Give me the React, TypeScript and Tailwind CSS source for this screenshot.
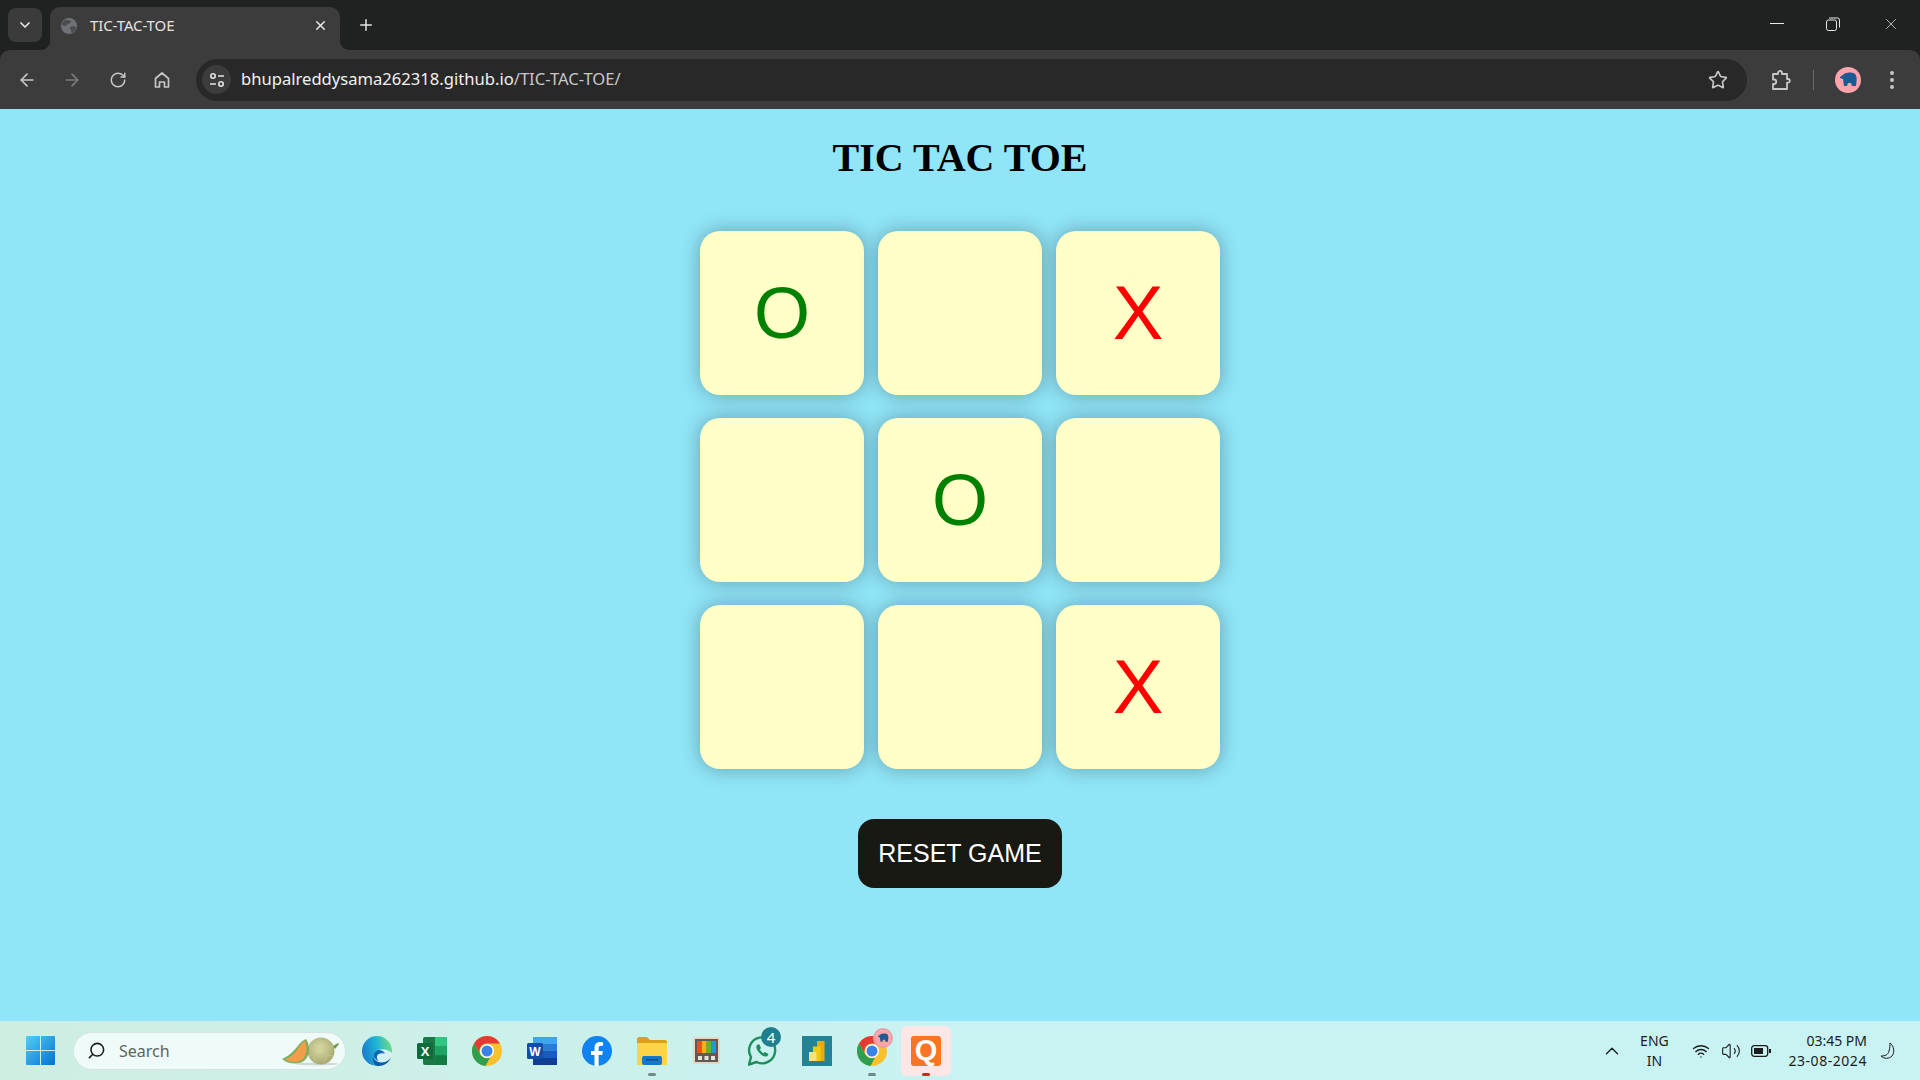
import { ArrowLeft, ArrowRight, ChevronDown, ChevronUp, Plus, RotateCw, Search, Star, Volume2, Wifi, X } from "lucide-react"

const board = ["O", "", "X", "", "O", "", "", "", "X"]

const uiFont = "font-['Noto_Sans','Open_Sans',sans-serif]"

const RestoreIcon = () => (
    <svg width="14" height="14" viewBox="0 0 14 14" fill="none" stroke="#e8e8e8" strokeWidth="1">
        <rect x="0.5" y="3" width="10" height="10.5" rx="2" />
        <path d="M3 1h8.5a2 2 0 0 1 2 2v7.5" />
    </svg>
)

const HomeIcon = () => (
    <svg width="20" height="20" viewBox="0 0 20 20" fill="none" stroke="#c7c7c7" strokeWidth="1.7">
        <path d="M3.5 8.5 10 3l6.500 5.500V17h-4v-5h-5v5h-4z" strokeLinejoin="round" />
    </svg>
)

const TuneIcon = () => (
    <svg width="18" height="18" viewBox="0 0 18 18" fill="none" stroke="#e3e3e3" strokeWidth="1.6">
        <circle cx="5" cy="5" r="2.200" />
        <path d="M10 5h6M2 13h6" />
        <circle cx="13" cy="13" r="2.200" />
    </svg>
)

const PuzzleIcon = () => (
    <svg width="22" height="22" viewBox="0 0 22 22" fill="none" stroke="#c7c7c7" strokeWidth="1.800">
        <path d="M3 5h5V4a2 2 0 0 1 4 0v1h5v5h1a1.800 1.800 0 0 1 0 3.600h-1V20H3v-5h1a2.200 2.200 0 0 0 0-4.500H3z" strokeLinejoin="round" />
    </svg>
)

const GlobeIcon = () => (
    <svg width="16" height="16" viewBox="0 0 16 16">
        <circle cx="8" cy="8" r="8" fill="#6e7276" />
        <path d="M4 2c2 0 5 0 6 1s-2 3-3 3-1 2-3 2-3-1-3-2 1-3 3-4zM9 9c2-1 5-1 6 0s-2 5-4 6c-1-1-1-2-1-3s-2-2-1-3z" fill="#4a4c4e" />
    </svg>
)

const Elephant = ({ size }: { size: number }) => (
    <svg width={size} height={size} viewBox="0 0 26 26">
        <circle cx="13" cy="13" r="13" fill="#fda4ab" />
        <path d="M5 10l4-3c3-2 9-2 11 0 2 2 2 6 1 12h-4l-1-3h-3l-1 3H9l-1-7-3-1z" fill="#1d5a94" />
    </svg>
)

const WindowsLogo = () => (
    <svg width="29" height="29" viewBox="0 0 29 29">
        <defs>
            <linearGradient id="win" x1="0" y1="0" x2="1" y2="1">
                <stop offset="0" stopColor="#4fd0fb" />
                <stop offset="1" stopColor="#0670cf" />
            </linearGradient>
        </defs>
        <path d="M1 0h13v14H0V1a1 1 0 0 1 1-1zM15 0h13a1 1 0 0 1 1 1v13H15zM0 15h14v14H1a1 1 0 0 1-1-1zM15 15h14v13a1 1 0 0 1-1 1H15z" fill="url(#win)" />
    </svg>
)

const Melon = () => (
    <svg width="60" height="30" viewBox="0 0 60 30">
        <defs>
            <radialGradient id="melon" cx="0.45" cy="0.4" r="0.65">
                <stop offset="0" stopColor="#dcdba8" />
                <stop offset="1" stopColor="#a3a56c" />
            </radialGradient>
        </defs>
        <ellipse cx="36" cy="28" rx="22" ry="1.500" fill="#00000022" />
        <circle cx="40" cy="15" r="13.500" fill="url(#melon)" />
        <path d="M34 3c-3 7-3 17 1 24M44 2c3 8 3 18-1 25M28 10c7 3 17 3 24 0M28 20c7-2 17-2 24 0" fill="none" stroke="#c4c48d" strokeWidth="0.700" />
        <path d="M52 10l5-3 1 1-4 5z" fill="#6f9a4c" />
        <path d="M25 3C17 6 15 17 1 23c7 6 19 6 24 0 4-6 4-14 0-20z" fill="#7fae5e" />
        <path d="M24 5c-6 3-8 14-20 18.500 6 3.500 15 3.500 19-1.500 3-5 3-12 1-17z" fill="#f29d4b" />
    </svg>
)

const Edge = () => (
    <svg width="30" height="30" viewBox="0 0 30 30">
        <defs>
            <linearGradient id="edge" x1="0" y1="0.6" x2="1" y2="0.4">
                <stop offset="0" stopColor="#1a78cc" />
                <stop offset="0.5" stopColor="#1cb2d6" />
                <stop offset="1" stopColor="#6fdc86" />
            </linearGradient>
        </defs>
        <circle cx="15" cy="15" r="15" fill="url(#edge)" />
        <path d="M30 17c-3-3-9-5-14-3-3 1-5 4-4 7 1 4 5 6 9 5.500 3-.5 6-2 8-5 1-2 1-3 1-4.500z" fill="#d4f2f4" />
        <path d="M16 14c-3 1-5 4-4 7 1 2 3 4 5 4.500-2-2-3-5-1-7 2-1.500 5-1.500 7-1-1-2-4-4-7-3.500z" fill="#0f68b4" />
        <path d="M29 21.500c-2 3-5 4.500-8 5-5 .5-9-1.500-10-6-.5 6 2 9.500 5 9.500 6 0 11-3.500 13-8.500z" fill="#0c5aa6" />
    </svg>
)

const Excel = () => (
    <svg width="30" height="30" viewBox="0 0 30 30">
        <rect x="6" y="1" width="24" height="28" rx="2" fill="#1a7a47" />
        <rect x="18" y="1" width="12" height="9.500" fill="#33c481" />
        <rect x="18" y="10.500" width="12" height="9" fill="#21a366" />
        <rect x="18" y="19.500" width="12" height="9.500" fill="#107c41" />
        <rect x="0" y="7" width="16" height="16" rx="1.500" fill="#0f6b39" />
        <text x="8" y="19.500" textAnchor="middle" fontSize="13" fontWeight="700" fill="#fff" fontFamily="Liberation Sans, sans-serif">X</text>
    </svg>
)

const Chrome = () => (
    <svg width="30" height="30" viewBox="0 0 30 30">
        <circle cx="15" cy="15" r="15" fill="#fbc02d" />
        <path d="M15 0a15 15 0 0 1 13 7.500H15a7.500 7.500 0 0 0-6.500 11.300L2 7.500A15 15 0 0 1 15 0z" fill="#e53935" />
        <path d="M2 7.500l6.500 11.300A7.500 7.500 0 0 0 18 21.500L13.500 30A15 15 0 0 1 2 7.500z" fill="#2e9e4f" />
        <circle cx="15" cy="15" r="7" fill="#fff" />
        <circle cx="15" cy="15" r="5.500" fill="#3b82e8" />
    </svg>
)

const Word = () => (
    <svg width="30" height="30" viewBox="0 0 30 30">
        <rect x="6" y="1" width="24" height="28" rx="2" fill="#185abd" />
        <rect x="6" y="1" width="24" height="7" fill="#41a5ee" />
        <rect x="6" y="8" width="24" height="7" fill="#2b7cd3" />
        <rect x="6" y="22" width="24" height="7" fill="#103f91" />
        <rect x="0" y="7" width="16" height="16" rx="1.500" fill="#124da8" />
        <text x="8" y="19.500" textAnchor="middle" fontSize="12" fontWeight="700" fill="#fff" fontFamily="Liberation Sans, sans-serif">W</text>
    </svg>
)

const Facebook = () => (
    <svg width="30" height="30" viewBox="0 0 30 30">
        <circle cx="15" cy="15" r="15" fill="#0f84f0" />
        <path d="M12.500 30V19H9v-4h3.500v-3c0-4 2.200-6 5.600-6l3 .2v3.600h-2c-1.900 0-2.500 1-2.500 2.300V15h4.300l-.7 4h-3.600v11z" fill="#fff" />
    </svg>
)

const Folder = () => (
    <svg width="30" height="28" viewBox="0 0 30 28">
        <path d="M0 2a2 2 0 0 1 2-2h8l3 3h15a2 2 0 0 1 2 2v4H0z" fill="#dca01a" />
        <path d="M0 6h30v22H0z" fill="#fdd447" />
        <rect x="5" y="19" width="20" height="9" rx="2" fill="#1479c9" />
        <rect x="9" y="22" width="12" height="1.500" fill="#0a4a8a" />
    </svg>
)

const ColorTool = () => (
    <svg width="27" height="27" viewBox="0 0 27 27">
        <rect width="27" height="27" rx="1.500" fill="#e6d7bf" />
        <rect x="2" y="2" width="23" height="23" fill="#5e5a57" />
        <rect x="4" y="4" width="4.800" height="12" fill="#e5501f" />
        <rect x="8.800" y="4" width="4.800" height="12" fill="#f6b21a" />
        <rect x="13.600" y="4" width="4.800" height="12" fill="#65b32e" />
        <rect x="18.400" y="4" width="4.600" height="12" fill="#1f9ad6" />
        <rect x="5" y="19" width="4" height="4" fill="#e8e2d6" />
        <rect x="11.500" y="19" width="4" height="4" fill="#e8e2d6" />
        <rect x="18" y="19" width="4" height="4" fill="#e8e2d6" />
    </svg>
)

const WhatsApp = () => (
    <svg width="30" height="30" viewBox="0 0 30 30" fill="none">
        <path d="M2 28.500l2-7.500A13 13 0 1 1 9.500 26z" stroke="#1c8f5c" strokeWidth="2.400" strokeLinejoin="round" />
        <path d="M10.500 8.500c-2 1.500-1.500 4.500 1.500 8s6 5 8.500 3.500l1-2-3.500-2-1.500 1.200c-1.500-.7-3-2.300-3.700-3.700l1.200-1.500-1.500-3.500z" fill="#1c8f5c" />
    </svg>
)

const PowerBi = () => (
    <svg width="30" height="30" viewBox="0 0 30 30">
        <rect width="30" height="30" fill="#238294" />
        <rect x="15" y="5" width="7.500" height="20" fill="#e6ad10" />
        <rect x="11" y="10.500" width="7.500" height="14.500" fill="#f2c811" />
        <rect x="7" y="16" width="7.500" height="9" fill="#f6e27f" />
    </svg>
)

const Quora = () => (
    <div className="w-[30px] h-[30px] rounded-[3px] bg-[#f97423] flex items-center justify-center">
        <span className="text-white text-[29px] leading-none font-bold font-['Liberation_Sans',sans-serif]">Q</span>
    </div>
)

const Battery = () => (
    <svg width="20" height="12" viewBox="0 0 20 12" fill="none">
        <rect x="0.700" y="0.700" width="16" height="10.600" rx="2.500" stroke="#1c1c1c" strokeWidth="1.300" />
        <rect x="3" y="3" width="9" height="6" fill="#1c1c1c" />
        <rect x="18" y="4" width="2" height="4" fill="#1c1c1c" />
    </svg>
)

const MoonIcon = () => (
    <svg width="17" height="18" viewBox="0 0 17 18" fill="none" stroke="#1c1c1c" strokeWidth="1">
        <path d="M10 1c4 3 5 9 2 13-3 3-8 3-11 0 4 0 7-1 8-5 1-3 1-6 1-8z" strokeLinejoin="round" />
    </svg>
)

const App = () => {
    return (
        <div className={`w-full h-[1080px] flex flex-col overflow-hidden bg-[#90e5f8] ${uiFont}`}>
            {/* Browser chrome */}
            <div className="shrink-0 bg-[#202221]">
                <div className="h-[50px] flex items-end pl-2">
                    <div className="w-[34px] h-[34px] mb-2 rounded-lg bg-[#3b3b3b] flex items-center justify-center">
                        <ChevronDown size={16} color="#e8e8e8" strokeWidth={2.5} />
                    </div>
                    <div className="ml-2 w-[290px] h-[43px] rounded-t-[10px] bg-[#3c3c3c] flex items-center pl-[11px] pr-3 pb-[6px] relative">
                        <span className="absolute left-[-10px] bottom-0 w-[10px] h-[10px] bg-[radial-gradient(circle_at_0_0,transparent_10px,#3c3c3c_10.5px)]" />
                        <span className="absolute right-[-10px] bottom-0 w-[10px] h-[10px] bg-[radial-gradient(circle_at_100%_0,transparent_10px,#3c3c3c_10.5px)]" />
                        <GlobeIcon />
                        <span className="ml-[13px] text-[15px] tracking-[-0.1px] text-[#e3e3e3]">TIC-TAC-TOE</span>
                        <X size={15} color="#e3e3e3" strokeWidth={2.5} className="ml-auto" />
                    </div>
                    <Plus size={18} color="#e3e3e3" strokeWidth={2} className="ml-[17px] mb-4" />
                    <div className="ml-auto flex items-center h-full pr-[20px] gap-[42px] pb-[3px]">
                        <div className="w-[14px] h-px bg-[#e8e8e8]" />
                        <RestoreIcon />
                        <X size={18} color="#e8e8e8" strokeWidth={1} />
                    </div>
                </div>

                {/* Toolbar */}
                <div className="h-[59px] rounded-t-[10px] bg-[#3c3c3c] flex items-center pl-[17px]">
                    <ArrowLeft size={20} color="#c7c7c7" strokeWidth={2} />
                    <ArrowRight size={20} color="#7b7b7b" strokeWidth={2} className="ml-[25px]" />
                    <RotateCw size={18} color="#c7c7c7" strokeWidth={2} className="ml-[27px]" />
                    <div className="ml-[25px]"><HomeIcon /></div>
                    <div className="ml-[24px] w-[1551px] h-[42px] rounded-full bg-[#282828] flex items-center pl-[6px] pr-[19px]">
                        <div className="w-[29px] h-[29px] rounded-full bg-[#3c3c3c] flex items-center justify-center">
                            <TuneIcon />
                        </div>
                        <span className="ml-[10px] text-[16.6px] text-[#f1f1f1]">
                            bhupalreddysama262318.github.io<span className="text-[#c7c7c7]">/TIC-TAC-TOE/</span>
                        </span>
                        <Star size={20} color="#c7c7c7" strokeWidth={2} className="ml-auto" />
                    </div>
                    <div className="ml-[23px]"><PuzzleIcon /></div>
                    <div className="ml-[21px] w-px h-5 bg-[#6b6b6b]" />
                    <div className="ml-[21px]"><Elephant size={26} /></div>
                    <div className="ml-[29px] flex flex-col gap-[3px]">
                        <span className="w-1 h-1 rounded-full bg-[#c7c7c7]" />
                        <span className="w-1 h-1 rounded-full bg-[#c7c7c7]" />
                        <span className="w-1 h-1 rounded-full bg-[#c7c7c7]" />
                    </div>
                </div>
            </div>

            {/* Game */}
            <main className="flex-1 flex flex-col items-center">
                <h1 className="mt-[25px] text-[40px] leading-[48px] font-bold text-black font-['Liberation_Serif',serif]">TIC TAC TOE</h1>
                <div className="mt-[49px] grid grid-cols-[repeat(3,164px)] gap-x-[14px] gap-y-[23px]">
                    {board.map((mark, i) => (
                        <div
                            key={i}
                            className={`h-[164px] rounded-[20px] bg-[#ffffc7] shadow-[0_0_20px_rgba(0,0,0,0.3)] flex items-center justify-center font-['Liberation_Sans',sans-serif] ${mark === "O" ? "text-[72px] text-[#008000]" : "text-[76px] text-[#ff0000]"}`}
                        >
                            {mark}
                        </div>
                    ))}
                </div>
                <button className="mt-[50px] w-[204px] h-[69px] rounded-[16px] bg-[#191913] text-white text-[25px] font-['Liberation_Sans',sans-serif]">
                    RESET GAME
                </button>
            </main>

            {/* Taskbar */}
            <footer className="h-[59px] shrink-0 bg-gradient-to-r from-[#cfeee2] via-[#c9f2f2] to-[#c9f2f2] flex items-center pl-[26px]">
                <WindowsLogo />
                <div className="ml-[18px] w-[273px] h-[38px] rounded-full bg-[#effbf8] border border-[#d5e6e2] flex items-center pl-[13px] pr-1">
                    <Search size={19} color="#1c1c1c" strokeWidth={2} className="-scale-x-100" />
                    <span className="ml-[13px] text-[16px] text-[#5c6462]">Search</span>
                    <div className="ml-auto"><Melon /></div>
                </div>
                <div className="ml-[3px] flex items-center">
                    <div className="w-[55px] flex justify-center"><Edge /></div>
                    <div className="w-[55px] flex justify-center"><Excel /></div>
                    <div className="w-[55px] flex justify-center"><Chrome /></div>
                    <div className="w-[55px] flex justify-center"><Word /></div>
                    <div className="w-[55px] flex justify-center"><Facebook /></div>
                    <div className="w-[55px] h-[50px] flex justify-center items-center relative">
                        <Folder />
                        <span className="absolute bottom-0 w-[8px] h-[3px] rounded-full bg-[#6f8b8c]" />
                    </div>
                    <div className="w-[55px] flex justify-center"><ColorTool /></div>
                    <div className="w-[55px] flex justify-center relative">
                        <WhatsApp />
                        <span className="absolute top-[-9px] left-[27px] w-5 h-5 rounded-full bg-[#1f7f8f] text-white text-[15px] leading-5 text-center">4</span>
                    </div>
                    <div className="w-[55px] flex justify-center"><PowerBi /></div>
                    <div className="w-[55px] h-[50px] flex justify-center items-center relative">
                        <Chrome />
                        <div className="absolute top-[2px] left-[29px] border-2 border-[#e8a0a4] rounded-full">
                            <Elephant size={16} />
                        </div>
                        <span className="absolute bottom-0 w-[8px] h-[3px] rounded-full bg-[#6f8b8c]" />
                    </div>
                    <div className="w-[50px] h-[50px] ml-[2px] rounded-md bg-[#fde6e6] flex justify-center items-center relative">
                        <Quora />
                        <span className="absolute bottom-0 w-[8px] h-[3px] rounded-full bg-[#c42b1c]" />
                    </div>
                </div>

                {/* System tray */}
                <div className="ml-auto flex items-center pr-[23px] text-[#1c1c1c]">
                    <ChevronUp size={22} strokeWidth={1.5} />
                    <div className="ml-[9px] w-[44px] text-center text-[14px] leading-[20px]">
                        <div>ENG</div>
                        <div>IN</div>
                    </div>
                    <Wifi size={18} strokeWidth={1.8} className="ml-[16px]" />
                    <Volume2 size={20} strokeWidth={1.3} className="ml-[11px]" />
                    <div className="ml-[10px]"><Battery /></div>
                    <div className="ml-[17px] text-right text-[14px] leading-[20px]">
                        <div>03:45 PM</div>
                        <div className="tracking-[0.55px]">23-08-2024</div>
                    </div>
                    <div className="ml-[13px]"><MoonIcon /></div>
                </div>
            </footer>
        </div>
    )
}

export default App
